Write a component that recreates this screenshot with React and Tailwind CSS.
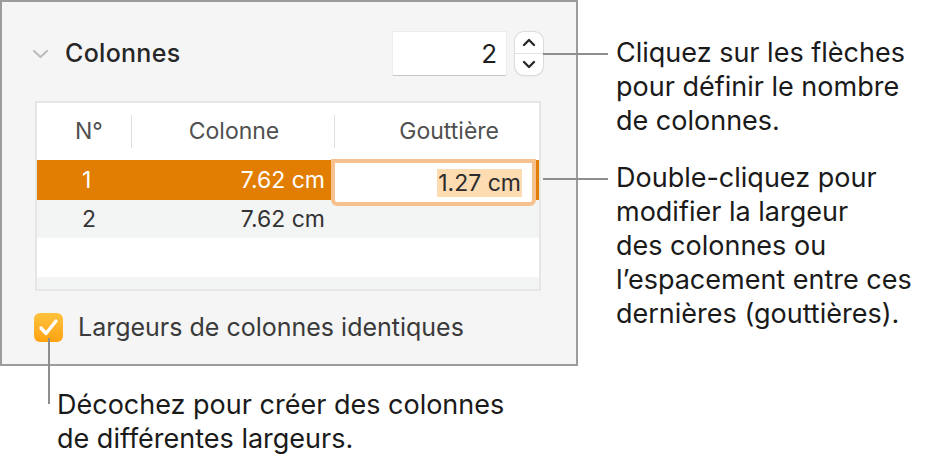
import { useState } from 'react';

const rows = [
  { n: 1, col: '7.62 cm', gut: '1.27 cm' },
  { n: 2, col: '7.62 cm', gut: '' },
];

/* leader line of a callout */
const Leader = ({ className }) => (
  <div className={`absolute bg-[#8e8e8e] ${className}`} />
);

const Stepper = () => (
  <div className="relative w-[28px] h-[43px] rounded-[9px] bg-white shadow-[0_0_0_1px_#dcdcdc,0_1px_2px_rgba(0,0,0,0.15)] flex flex-col">
    <div className="flex-1 flex items-center justify-center">
      <svg width="14" height="9" viewBox="0 0 14 9">
        <path d="M2 7 L7 2 L12 7" fill="none" stroke="#2a2a2a" strokeWidth="2.4" strokeLinecap="round" strokeLinejoin="round" />
      </svg>
    </div>
    <div className="h-px bg-[#e2e2e2]" />
    <div className="flex-1 flex items-center justify-center">
      <svg width="14" height="9" viewBox="0 0 14 9">
        <path d="M2 2 L7 7 L12 2" fill="none" stroke="#2a2a2a" strokeWidth="2.4" strokeLinecap="round" strokeLinejoin="round" />
      </svg>
    </div>
  </div>
);

export default function App() {
  const [same, setSame] = useState(true);

  return (
    <div className="relative w-[937px] h-[467px] overflow-hidden bg-white font-['Inter',sans-serif]">
      <div className="flex">
        {/* Inspector panel */}
        <section className="w-[578px] h-[366px] shrink-0 border-2 border-[#9c9c9c] bg-[#f5f5f5] pt-[30px] pl-[33px] pr-[35px]">
          <div className="flex items-center h-[43px]">
            <svg width="17" height="10" viewBox="0 0 17 10" className="-ml-[3px]">
              <path d="M2 2 L8.5 8 L15 2" fill="none" stroke="#bdbdbd" strokeWidth="2.2" strokeLinecap="round" strokeLinejoin="round" />
            </svg>
            <h2 className="ml-[16px] text-[25px] font-medium text-[#262626] tracking-[0.3px]">Colonnes</h2>
            <div className="ml-auto flex items-center gap-[9px] -mr-[2px]">
              <div className="w-[113px] h-[43px] bg-white shadow-[0_1px_0_#c8c8c8,0_0_0_1px_#ececec] flex items-center justify-end pr-[9px] text-[26px] text-[#1f1f1f]">
                2
              </div>
              <Stepper />
            </div>
          </div>

          {/* Columns table */}
          <div className="mt-[26px] h-[190px] border-2 border-[#e6e6e6] bg-white flex flex-col text-[23px]">
            <div className="h-[57px] flex items-center text-[#505050]">
              <div className="w-[94px] pl-[38px]">N°</div>
              <div className="w-px h-[33px] bg-[#dedede]" />
              <div className="w-[202px] text-center pl-[2px]">Colonne</div>
              <div className="w-px h-[33px] bg-[#dedede]" />
              <div className="flex-1 text-right pr-[40px]">Gouttière</div>
            </div>
            {rows.map((r) => {
              const active = r.n === 1;
              return (
                <div
                  key={r.n}
                  className={`flex items-center ${active ? 'h-[40px] bg-[#e17d00] text-white' : 'h-[38px] bg-[#f3f4f4] text-[#333]'}`}
                >
                  <div className="w-[94px] pl-[45px]">{r.n}</div>
                  <div className="w-[203px] text-right pr-[9px]">{r.col}</div>
                  {active ? (
                    <div className="relative flex-1 h-full">
                      <div className="absolute left-[-3px] top-[-1px] w-[205px] h-[47px] rounded-b-[6px] border-[4px] border-[#f6c18f] bg-white flex items-center justify-end pr-[10px] text-[#2b2b2b]">
                        <span className="bg-[#fddcb2] px-[1px] leading-[28px]">{r.gut}</span>
                      </div>
                    </div>
                  ) : (
                    <div className="flex-1" />
                  )}
                </div>
              );
            })}
            <div className="h-[39px] bg-white" />
            <div className="flex-1 bg-[#f3f4f4]" />
          </div>

          {/* Equal widths checkbox */}
          <label className="mt-[18px] flex items-center cursor-pointer">
            <button
              type="button"
              onClick={() => setSame(!same)}
              className={`w-[29px] h-[29px] -ml-[1px] rounded-[6px] flex items-center justify-center ${same ? 'bg-gradient-to-b from-[#ffc23b] to-[#ffa20c]' : 'bg-white border border-[#bbb]'}`}
            >
              {same && (
                <svg width="21" height="19" viewBox="0 0 21 19">
                  <path d="M3 10 L8 15.5 L18 3" fill="none" stroke="white" strokeWidth="3.4" strokeLinecap="round" strokeLinejoin="round" />
                </svg>
              )}
            </button>
            <span className="ml-[15px] text-[25px] text-[#3a3a3a]">Largeurs de colonnes identiques</span>
          </label>
        </section>

        {/* Right callouts */}
        <div className="ml-[38px] text-[27px] leading-[34px] text-[#1a1a1a]">
          <p className="mt-[36px]">
            Cliquez sur les flèches
            <br />
            pour définir le nombre
            <br />
            de colonnes.
          </p>
          <p className="mt-[23px]">
            Double-cliquez pour
            <br />
            modifier la largeur
            <br />
            des colonnes ou
            <br />
            l’espacement entre ces
            <br />
            dernières (gouttières).
          </p>
        </div>
      </div>

      {/* Bottom callout */}
      <p className="mt-[22px] pl-[57px] text-[27px] leading-[34px] text-[#1a1a1a]">
        Décochez pour créer des colonnes
        <br />
        de différentes largeurs.
      </p>

      <Leader className="left-[543px] top-[53px] w-[65px] h-[2px]" />
      <Leader className="left-[543px] top-[178px] w-[65px] h-[2px]" />
      <Leader className="left-[48px] top-[338px] w-[2px] h-[66px]" />
    </div>
  );
}
